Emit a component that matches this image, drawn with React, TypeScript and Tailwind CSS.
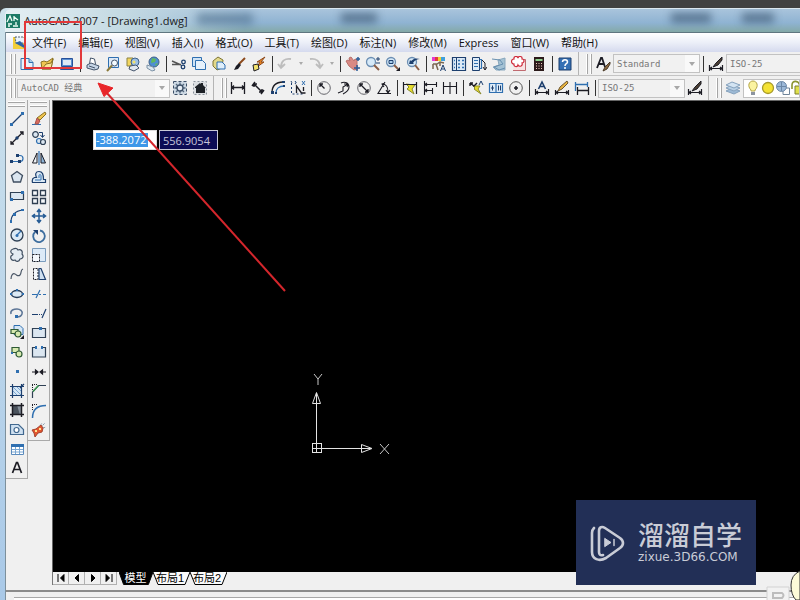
import React from 'react';

const ink = '#1c1c24';
const navy = '#1d3f6e';
const blue = '#2f6fb0';
const sky = '#a9cdea';

const icons: Record<string, React.ReactNode> = {
  // standard toolbar
  new: (
    <>
      <path d="M2 2.500h8l4 4v7H2z" fill="#e8f1fb" stroke={blue} />
      <path d="M10 2.500v4h4" fill={sky} stroke={blue} />
    </>
  ),
  open: (
    <>
      <path d="M2 6l3-1 3 1 6-4-2 11-9 0z" fill="#f0c550" stroke="#8a7020" />
      <path d="M3 13l4-5 5-1 2-4-2 10z" fill="#fbe394" stroke="#8a7020" />
    </>
  ),
  save: (
    <>
      <path d="M2.500 2.500h11v8h-11z" fill="#5b8fd0" stroke="#27509a" />
      <path d="M4 4h8v5H4z" fill="#dde9f6" />
      <path d="M1.500 11.500h13v2h-13z" fill="#8fb2dd" stroke="#27509a" />
    </>
  ),
  print: (
    <>
      <path d="M4.500 8l1-6 4 1 1 5" fill="#fff" stroke="#44546a" />
      <path d="M2 9l4-2 8 3-1 3-4 1-7-2z" fill="#c6d5e6" stroke="#44546a" />
      <path d="M4 10l6 2" stroke="#44546a" />
    </>
  ),
  preview: (
    <>
      <path d="M3.500 1.500h10v10h-10z" fill="#dbe8f6" stroke={blue} />
      <circle cx="9.500" cy="7" r="3" fill="#f4fbff" stroke="#44546a" />
      <path d="M7 9.500L2 15" stroke="#8b7a3a" strokeWidth="2" />
    </>
  ),
  publish: (
    <>
      <path d="M2 2h6l2 3v5H2z" fill="#f3d65e" stroke="#8d8340" />
      <circle cx="10" cy="6" r="4" fill="#9cc0e4" stroke="#3e6088" />
      <path d="M5 10l6-1 3 3-5 3-5-2z" fill="#dfe7ef" stroke="#44546a" />
      <circle cx="9" cy="6" r="1.500" fill="#f3e26b" />
    </>
  ),
  web: (
    <>
      <circle cx="9" cy="6" r="5" fill="#4f8fd2" stroke="#3e6088" />
      <path d="M7 2l4 1-1 3-4 1zM10 8l3-1-2 3z" fill="#62b95a" />
      <path d="M2 9l6 2 2 3-3 1-5-3z" fill="#dbe7f0" stroke="#7d92a6" />
    </>
  ),
  cut: (
    <>
      <path d="M1 5l9 4M1 8.500h9" stroke="#555" strokeWidth="1.400" />
      <circle cx="12.500" cy="6" r="1.800" fill="none" stroke={navy} strokeWidth="1.300" />
      <circle cx="12" cy="11" r="1.800" fill="none" stroke={navy} strokeWidth="1.300" />
    </>
  ),
  copy: (
    <>
      <path d="M1.500 1.500h9v9h-9z" fill="#cfe3f5" stroke={blue} />
      <path d="M4.500 4.500h7l3 3v6h-10z" fill="#e6f1fb" stroke={blue} />
    </>
  ),
  paste: (
    <>
      <path d="M2 5l5-4 5 3-1 8-5 2-4-4z" fill="#e3d98a" stroke="#7d7434" />
      <path d="M6 6h5l3 3v4H6z" fill="#dfeefa" stroke={blue} />
    </>
  ),
  match: (
    <>
      <path d="M14 2L8 8" stroke="#8c4a1c" strokeWidth="2" />
      <path d="M8 7l2 2-3 4-4 1 2-4z" fill={ink} />
    </>
  ),
  block: (
    <>
      <path d="M14 1L6 6h3l-3 5 7-5h-3z" fill="#f08a24" stroke="#8c4a1c" />
      <path d="M2 9l5-1 1 5-5 2z" fill="#f3e26b" stroke={ink} />
    </>
  ),
  undo: (
    <path d="M14 3C8 2 4 5 4 11M1 8l3 4 4-4" fill="none" stroke="#bdbdbd" strokeWidth="1.800" />
  ),
  redo: (
    <path d="M2 3c6-1 10 2 10 8M15 8l-3 4-4-4" fill="none" stroke="#bdbdbd" strokeWidth="1.800" />
  ),
  pan: (
    <>
      <path d="M1 5l2-1 2 1-1-3 2-1 3 4 1-2 2 1v5l1 4-4 1-5-4z" fill="#d98a84" stroke="#b9706a" />
      <path d="M12 9v6M9 12h6M13 1v4M11 3h4" stroke="#2a5c96" strokeWidth="1.500" />
    </>
  ),
  zoom: (
    <>
      <circle cx="6" cy="6" r="4.500" fill="#d6e9f8" stroke="#6d8fb3" strokeWidth="1.300" />
      <path d="M9 9l5 5" stroke="#8a5d46" strokeWidth="2" />
      <path d="M11 3h4M13 1v4M11 7h4" stroke={navy} />
    </>
  ),
  zoomWindow: (
    <>
      <circle cx="6" cy="6" r="4.500" fill="#d6e9f8" stroke="#6d8fb3" strokeWidth="1.300" />
      <path d="M4 4.500h4v3H4z" fill={sky} stroke={navy} />
      <path d="M9 9l4 4" stroke="#8a5d46" strokeWidth="2" />
      <path d="M15 11v4h-4z" fill={ink} />
    </>
  ),
  zoomPrev: (
    <>
      <circle cx="7" cy="6" r="4.500" fill="#d6e9f8" stroke="#6d8fb3" strokeWidth="1.300" />
      <path d="M10 9l4 5" stroke="#8a5d46" strokeWidth="2" />
      <path d="M4 8l1-4 1 1c3-3 6-3 9-2-3 0-5 1-7 4l1 1z" fill={navy} />
    </>
  ),
  properties: (
    <>
      <path d="M1 1h3v4H1z" fill="#e43bd0" />
      <path d="M4 1h3v4H4z" fill="#e23b3b" />
      <path d="M7 1h3v4H7z" fill="#f0d332" />
      <path d="M10 1h4v4h-4z" fill="#3fa0dd" />
      <path d="M2 8h4l3-2 4 1M2 8v5M5 8l2 6M9 7v3" stroke="#7a6650" fill="none" strokeWidth="1.500" />
      <path d="M9.500 15l2.500-6 2.500 6M10.500 13h3" stroke={navy} fill="none" />
    </>
  ),
  designCenter: (
    <>
      <path d="M1.500 1.500h13v13h-13z" fill="#dceaf7" stroke={navy} strokeWidth="1.200" />
      <path d="M5.500 2v12" stroke={navy} />
      <path d="M7 4.500h2M11 4.500h2M7 8h2M11 8h2M7 11.500h2M11 11.500h2M3 4.500h1M3 8h1M3 11.500h1" stroke={blue} strokeWidth="1.500" />
    </>
  ),
  palettes: (
    <>
      <path d="M1.500 1.500h7v13h-7z" fill="#dceaf7" stroke={navy} />
      <path d="M3 4.500h4M3 7.500h4M3 10.500h4M8.500 3.500h2v9h-2" stroke={blue} fill="none" strokeWidth="1.200" />
      <path d="M11 4l3 3v6M12 11l2 3 2-3" stroke={ink} fill="none" />
    </>
  ),
  sheetSet: (
    <>
      <path d="M7 4l7-2v12H5l-3-3 6-2z" fill="#a4c2d4" stroke="#8aa8bd" />
      <path d="M1 3l8 1 3 4-9 3 5 3 6-2" stroke="#6890b0" fill="none" />
    </>
  ),
  markup: (
    <>
      <path d="M4 3.500h10.500v11H2" fill="#f7e3e3" stroke="#c06a70" />
      <path d="M3 3a2 2 0 0 1 4-1 2 2 0 0 1 4 1 2 2 0 0 1 0 4 2 2 0 0 1-4 2 2 2 0 0 1-4-1 2.500 2.500 0 0 1 0-5z" fill="#fff" stroke="#cf2a3a" strokeWidth="1.200" />
    </>
  ),
  calculator: (
    <>
      <path d="M3 1h10v14H3z" fill="#2b1a1a" />
      <path d="M4.500 3h7v2h-7z" fill="#8fd08f" />
      <path d="M5 7.500h1M7.500 7.500h1M10 7.500h1M5 10h1M7.500 10h1M10 10h1M5 12.500h1M7.500 12.500h1M10 12.500h1" stroke="#f1c9c0" />
    </>
  ),
  help: (
    <>
      <path d="M2 2h12v12H2z" fill="#3570b4" stroke="#1d3f6e" />
      <path d="M5.500 6c0-3 5-3 5 0 0 2-2.500 1.500-2.500 4M8 11v2" stroke="#fff" fill="none" strokeWidth="1.500" />
    </>
  ),
  textStyle: (
    <>
      <path d="M2 12L6 2h1l3 9M4 8h5" stroke={ink} fill="none" strokeWidth="1.800" />
      <path d="M15 6l-5 5-2 4 4-2 3-5z" fill="#8c6a42" stroke="#4a3a28" />
    </>
  ),
  dimStyle: (
    <>
      <path d="M1.500 9v6M14.500 9v6M1 12.500h14M4 11l-2 1.500L4 14M12 11l2 1.500-2 1.500" stroke={ink} fill="none" strokeWidth="1.200" />
      <path d="M14 1L8 7l-3 4 5-2 4-5z" fill="#4c3f33" stroke={ink} />
    </>
  ),
  // workspace toolbar
  gear: (
    <>
      <path d="M1.500 1.500h13v13h-13z" fill="#ccd8e3" stroke="#3c4f66" strokeDasharray="3 2" />
      <path d="M8 2.500v11M2.500 8h11M4 4l8 8M12 4l-8 8" stroke="#566a80" strokeWidth="1.300" />
      <circle cx="8" cy="8" r="3" fill="#e7eef5" stroke="#3c4f66" strokeWidth="1.300" />
    </>
  ),
  home: (
    <>
      <path d="M1.500 1.500h13v13h-13z" fill="#dcdfe2" stroke="#8a929b" strokeDasharray="2 2" />
      <path d="M3 7l5-4 1 1V3h2v2l3 3h-1v5H4V8H3z" fill="#1d2126" />
    </>
  ),
  // dimension toolbar
  dimLinear: (
    <path d="M1.500 2v12M14.500 2v12M1 7.500h14M4 5.500l-2 2 2 2M12 5.500l2 2-2 2" stroke={ink} fill="none" strokeWidth="1.300" />
  ),
  dimAligned: (
    <path d="M2 6l3-4M11 14l3-4M4 4l8 8M4 4v3M4 4h3M12 12V9M12 12H9" stroke={ink} fill="none" strokeWidth="1.500" />
  ),
  dimArc: (
    <>
      <path d="M2 13C2 6 6 2 13 2" stroke={ink} fill="none" strokeWidth="1.300" />
      <path d="M6 13c0-4 3-7 8-7" stroke={blue} fill="none" strokeWidth="1.300" />
      <path d="M1 11h3v3H1zM12 1h3v2h-3zM5 12h2v2H5zM13 5h2v2h-2z" fill={navy} />
    </>
  ),
  dimOrdinate: (
    <>
      <path d="M1.500 3v11H14M5 1l2 3M5 4l2-3M1 1l1 2" stroke={navy} fill="none" strokeDasharray="2 2" />
      <path d="M6.500 13V6l5 7h4M13.500 7v4" stroke={ink} fill="none" strokeWidth="1.300" />
      <path d="M12 1l3 4M15 1l-3 4" stroke={blue} />
    </>
  ),
  dimRadius: (
    <>
      <circle cx="8" cy="8" r="6.300" fill="none" stroke="#66666c" />
      <path d="M8.500 8.500L4.500 4.500M4 7V4h3" stroke={ink} fill="none" strokeWidth="1.300" />
    </>
  ),
  dimJogged: (
    <path d="M5 3c4-2 8 0 8 4 0 3-2 5-6 7M2 13l5-2 0-4 5-3M12 4l-1 3M12 4H8" stroke={ink} fill="none" strokeWidth="1.100" />
  ),
  dimDiameter: (
    <>
      <circle cx="8" cy="8" r="6.300" fill="none" stroke="#66666c" />
      <path d="M4.500 4.500l7 7M4 7V4h3M12 9v3H9" stroke={ink} fill="none" strokeWidth="1.300" />
    </>
  ),
  dimAngular: (
    <path d="M9 2L2 13.500h13M6 4c4 0 6 3 6 8M9 3L6 4l2 3M10 10l2 3 2-3" stroke={ink} fill="none" strokeWidth="1.100" />
  ),
  dimQuick: (
    <>
      <path d="M4 4l9 1-3 4 2 5-7-5 2-2z" fill="#e6dc2c" stroke="#8b8a30" />
      <path d="M1.500 2v12M14.500 2v12M1 4.500h13" stroke={ink} fill="none" strokeWidth="1.200" />
    </>
  ),
  dimBaseline: (
    <path d="M2.500 1v14M3 4.500h12M3 10.500h7M10.500 8v6M14.500 2v5M5 3L3 4.500 5 6M5 9l-2 1.500L5 12" stroke={ink} fill="none" strokeWidth="1.100" />
  ),
  dimContinue: (
    <path d="M1.500 2v12M8 2v12M14.500 2v12M1 6.500h13" stroke={ink} fill="none" strokeWidth="1.100" />
  ),
  leader: (
    <>
      <path d="M5 6h7l-2 3 3 5-7-5 1-1z" fill="#e6dc2c" stroke="#8b8a30" />
      <path d="M2 3l4 3 3-3M2 3v3M2 3h3" stroke={ink} fill="none" strokeWidth="1.400" />
      <path d="M11 5l2-4 2 4" stroke={navy} fill="none" />
    </>
  ),
  tolerance: (
    <>
      <path d="M1.500 3.500h13v9h-13zM8 3.500v9" fill="#dfecf8" stroke={blue} strokeWidth="1.200" />
      <path d="M4.500 5.500v5M3 8h3M10.500 5.500v5M12.500 5.500v5" stroke={navy} />
    </>
  ),
  center: (
    <>
      <circle cx="8" cy="8" r="6.300" fill="none" stroke="#555" />
      <path d="M8 6v4M6 8h4" stroke={ink} strokeWidth="1.600" />
    </>
  ),
  dimText: (
    <>
      <path d="M4.500 9L8 2l3.500 7M5.500 6.500h5" stroke={navy} fill="none" strokeWidth="1.600" />
      <path d="M1.500 9v6M14.500 9v6M1 12.500h14M4 11l-2 1.500L4 14M12 11l2 1.500-2 1.500" stroke={ink} fill="none" strokeWidth="1.200" />
    </>
  ),
  dimEdit: (
    <>
      <path d="M13 1l1 2-6 6-4 2 2-4z" fill="#e8b440" stroke="#6b5530" />
      <path d="M1.500 10v5M14.500 10v5M1 12.500h14M4 11l-2 1.500L4 14M12 11l2 1.500-2 1.500" stroke={ink} fill="none" strokeWidth="1.200" />
    </>
  ),
  dimUpdate: (
    <>
      <path d="M1.500 2v9M13.500 2v5M1 4.500h13" stroke={blue} fill="none" strokeWidth="1.300" />
      <path d="M3.500 7v8M14.500 7v8M3 10.500h12" stroke={ink} fill="none" strokeWidth="1.300" />
    </>
  ),
  // layers
  layers: (
    <>
      <path d="M1 11l6-3 8 3-6 3z" fill="#9dbad6" stroke="#86a2bd" />
      <path d="M1 8l6-3 8 3-6 3z" fill="#b8d0e6" stroke="#86a2bd" />
      <path d="M1 5l6-3 8 3-6 3z" fill="#d3e4f3" stroke="#86a2bd" />
    </>
  ),
  bulb: (
    <>
      <path d="M6 10C2 6 4 1 8 1s6 5 2 9v1H6z" fill="#fbf3a0" stroke="#b3a444" />
      <path d="M6 12h4v3H6z" fill="#8c94a0" />
    </>
  ),
  sun: <circle cx="8" cy="8" r="5.500" fill="#f4e234" stroke="#a79a2c" strokeWidth="1.300" />,
  freeze: (
    <>
      <path d="M8 8h6.500v6.500H8z" fill="#fff" stroke="#70859a" />
      <circle cx="6.500" cy="6.500" r="5" fill="#9bb8d8" stroke="#6c88a8" />
      <path d="M6.500 2v9M2 6.500h9" stroke="#6c88a8" />
    </>
  ),
  lock: (
    <>
      <path d="M2 9V5c0-5 7-5 8 1" fill="none" stroke="#8a9430" strokeWidth="1.600" />
      <path d="M5 6h9v8H5z" fill="#dfe04a" stroke="#7d8030" />
    </>
  ),
  // draw toolbar
  line: (
    <>
      <path d="M2 14L14 2" stroke={navy} strokeWidth="1.200" />
      <path d="M1 12h3v3H1zM12 1h3v3h-3z" fill={blue} />
    </>
  ),
  xline: (
    <>
      <path d="M2 14L14 2M11 2h3v3M2 11v3h3" stroke={ink} strokeWidth="1.300" fill="none" />
      <circle cx="8" cy="8" r="1.700" fill={navy} />
    </>
  ),
  pline: (
    <>
      <path d="M2 11.500h9a3 3 0 0 0 0-6H9" stroke={blue} strokeWidth="1.200" fill="none" />
      <path d="M1 10h3v3H1zM9 10h3v3H9zM7 4h3v3H7z" fill={navy} />
    </>
  ),
  polygon: <path d="M8 2.500l5.500 4L11.500 13h-7l-2-6.500z" fill="#dbe6f0" stroke="#3f4e60" strokeWidth="1.300" />,
  rect: (
    <>
      <path d="M1.500 4.500h13v7h-13z" fill="#dbe6f0" stroke="#2f4054" strokeWidth="1.200" />
      <path d="M12 3h3v3h-3zM1 10h3v3H1z" fill={blue} />
    </>
  ),
  arc: (
    <>
      <path d="M2 14C2 7 6 3 14 2" stroke={navy} strokeWidth="1.200" fill="none" />
      <path d="M1 12h2v3H1zM4 5h3v3H4zM12 1h3v2h-3z" fill={blue} />
    </>
  ),
  circle: (
    <>
      <circle cx="8" cy="8" r="6" fill="#dbe9f5" stroke="#2f4054" strokeWidth="1.300" />
      <path d="M8 8l4-4" stroke={blue} strokeWidth="1.200" />
      <circle cx="8" cy="8.500" r="1.500" fill={blue} />
    </>
  ),
  revcloud: (
    <path d="M4 2c2-1 4-1 5 1 3-1 5 1 4 4 2 2 1 5-2 5-1 3-4 3-5 1-3 1-5-1-4-4 1-1 2-1 2-2-3-1-3-4 0-5z" fill="#e4ebf2" stroke="#3f4e60" strokeWidth="1.200" />
  ),
  spline: <path d="M2 13c0-4 2-6 4-5s3 3 5 1 0-5 3-6" stroke="#4a5666" strokeWidth="1.200" fill="none" />,
  ellipse: (
    <>
      <ellipse cx="8" cy="8" rx="5.500" ry="3.500" fill="#dbe9f5" stroke="#243a56" strokeWidth="1.500" />
      <path d="M1 7h2v2H1zM13 7h2v2h-2zM7 3h2v2H7z" fill={blue} />
    </>
  ),
  ellipseArc: (
    <>
      <path d="M2 9C1 5 5 4 8 4s6 2 5 5-3 3-5 3" stroke="#5c7596" strokeWidth="1.500" fill="none" />
      <path d="M6 10h3v3H6z" fill={blue} />
    </>
  ),
  insert: (
    <>
      <path d="M5 1.500h6l3 3v6H5z" fill="#d5e6f5" stroke={blue} />
      <path d="M2 5.500h7v4H2z" fill="#d7eab0" stroke="#2f5a34" strokeWidth="1.200" />
      <circle cx="9" cy="10" r="3" fill="#d7eab0" stroke="#2f5a34" strokeWidth="1.200" />
      <path d="M15 11v4h-4z" fill={ink} />
    </>
  ),
  makeBlock: (
    <>
      <path d="M3 3.500h7v5H3z" fill="#d7eab0" stroke="#2f5a34" strokeWidth="1.200" />
      <circle cx="10" cy="10" r="3" fill="#d7eab0" stroke="#2f5a34" strokeWidth="1.200" />
      <path d="M2 8h2v2H2z" fill={blue} />
    </>
  ),
  point: <path d="M7 7h3v3H7z" fill={blue} />,
  hatch: (
    <>
      <path d="M3 3h10v10H3z" fill="#d5e6f5" />
      <path d="M3 7l6 6M3 3l10 10M7 3l6 6" stroke="#7aa7d3" />
      <path d="M3.500 1v14M12.500 1v14M1 3.500h14M1 12.500h14M11 5l4-4" stroke={navy} strokeWidth="1.200" />
    </>
  ),
  gradient: (
    <>
      <path d="M3 3h10v10H3z" fill="#4a525c" />
      <path d="M8 3h5v10h-2z" fill="#848e99" />
      <path d="M3.500 1v14M12.500 1v14M1 3.500h14M1 12.500h14" stroke={ink} strokeWidth="1.500" />
    </>
  ),
  region: (
    <>
      <path d="M1.500 3.500h8l5 5v5h-13z" fill="#cfe0f0" stroke="#41688f" strokeWidth="1.200" />
      <circle cx="7.500" cy="9" r="2.500" fill="#fff" stroke="#41688f" strokeWidth="1.200" />
    </>
  ),
  table: (
    <>
      <path d="M2.500 3.500h12v10h-12z" fill="#fff" stroke="#5b8bbd" />
      <path d="M2 3h13v3H2z" fill={blue} />
      <path d="M6.500 6v7M10.500 6v7M3 8.500h11M3 11h11" stroke="#7aa7d3" />
    </>
  ),
  mtext: <path d="M3.500 13L7.500 2.500h1L12.500 13M5 9.500h6" stroke={ink} fill="none" strokeWidth="1.700" />,
  // modify toolbar
  erase: (
    <>
      <path d="M1 13.500h9" stroke={blue} />
      <path d="M14 1l1 2-6 6-3-2z" fill="#f0c550" stroke="#8a7020" />
      <path d="M6 7l3 3-2 3H4z" fill="#d9695c" stroke="#a4554d" />
    </>
  ),
  copyObj: (
    <>
      <circle cx="4.500" cy="4.500" r="2.800" fill="#dbe6f0" stroke="#2f4054" strokeWidth="1.200" />
      <circle cx="8" cy="11" r="2.500" fill="#dbe6f0" stroke={blue} strokeWidth="1.200" />
      <circle cx="12" cy="12" r="2.500" fill="#dbe6f0" stroke="#2f4054" strokeWidth="1.200" />
      <path d="M8 2.500h3.500V7M9.500 5l2 2.500 2-2.500" stroke={navy} fill="none" />
    </>
  ),
  mirror: (
    <>
      <path d="M6 3v10H1.500z" fill="#eef3f8" stroke={ink} />
      <path d="M10 3v10h4.500z" fill="#8fb5d8" stroke={ink} />
      <path d="M8 1v14" stroke={blue} strokeWidth="1.200" />
    </>
  ),
  offset: (
    <>
      <path d="M1.500 13.500h13v-3h-2c0-5-1-8-4.500-8s-4 3-2.500 6h-2q-3 1-2 5z" fill="#dbe9f5" stroke={navy} strokeWidth="1.200" />
      <path d="M4 11h6V7c0-2-2-2-2 0v2" stroke={blue} fill="none" />
    </>
  ),
  array: (
    <path d="M1.500 1.500h5v5h-5zM9.500 1.500h5v5h-5zM1.500 9.500h5v5h-5zM9.500 9.500h5v5h-5z" fill="#f6f8fa" stroke="#2f3e50" strokeWidth="1.300" />
  ),
  move: (
    <path d="M8 2v12M2 8h12M6 4l2-2.500L10 4M6 12l2 2.500 2-2.500M4 6L1.500 8 4 10M12 6l2.500 2-2.500 2" stroke="#245a94" fill="none" strokeWidth="1.500" />
  ),
  rotate: (
    <>
      <path d="M4 4A5.800 5.800 0 1 0 9 2.500" stroke="#3d6e9f" fill="none" strokeWidth="1.800" />
      <path d="M2 2h5v5z" fill={navy} />
    </>
  ),
  scale: (
    <>
      <path d="M1.500 1.500h13v13h-13z" fill="#dceaf7" stroke="#7a9cbd" />
      <path d="M1.500 7.500h7v7h-7z" fill="#f4f8fc" stroke={ink} strokeDasharray="2 1" />
    </>
  ),
  stretch: (
    <>
      <path d="M2.500 2.500v11H7v-11z" fill="#f4f8fc" stroke={ink} strokeDasharray="2 1" />
      <path d="M8 2.500h2l4.500 11H8z" fill="#cfe0f0" stroke={navy} strokeWidth="1.200" />
    </>
  ),
  trim: <path d="M1 8.500h5M8 8.500h2M12 8.500h3M5 12l4-8" stroke={blue} strokeWidth="1.200" />,
  extend: <path d="M1 9.500h6M8 9.500h1M10 9.500h1M11 13l4-9" stroke={navy} strokeWidth="1.200" />,
  breakPoint: (
    <>
      <path d="M1.500 3.500h13v9h-13z" fill="#dbe6f0" stroke="#2f4054" strokeWidth="1.200" />
      <path d="M8 2h3v3H8z" fill={blue} />
    </>
  ),
  breakObj: (
    <>
      <path d="M2 4h12v9H2z" fill="#dbe6f0" />
      <path d="M5 3.500H1.500V13h13V3.500H11" stroke="#2f4054" strokeWidth="1.200" fill="none" />
      <path d="M4 2h2v3H4zM10 2h2v3h-2z" fill={blue} />
    </>
  ),
  join: <path d="M1 8h5M10 8h5M4.500 6l2.500 2-2.500 2zM11.500 6L9 8l2.500 2z" stroke={ink} fill={navy} strokeWidth="1.200" />,
  chamfer: (
    <>
      <path d="M1.500 15V9l6-6.500H15" stroke="#2f4054" fill="none" strokeWidth="1.200" />
      <path d="M1 1.500h6M1.500 2v6" stroke={ink} strokeDasharray="1 1" />
      <path d="M2 8.500l5.500-6" stroke="#3a9a4e" strokeWidth="1.300" />
    </>
  ),
  fillet: (
    <>
      <path d="M1.500 15C1.500 7 6 2.500 15 2.500" stroke={blue} fill="none" strokeWidth="1.500" />
      <path d="M1 1.500h6M1.500 2v6" stroke={ink} strokeDasharray="1 1" />
    </>
  ),
  explode: (
    <>
      <path d="M10 5l4-4M12 6l3-1M9 4l2-3" stroke="#7d93a8" strokeDasharray="2 1" />
      <path d="M1 8l4-1 5-4 2 3-1 4-4 1-3 4-1-4z" fill="#e4562e" stroke="#a34430" />
      <path d="M4 8h2v2H4zM8 6h2v2H8z" fill="#fbe394" />
    </>
  ),
};

type Entry = string | { sep: true } | { arrow: true };
const sep: Entry = { sep: true };
const arrow: Entry = { arrow: true };

const standardBar: Entry[] = [
  'new', 'open', 'save', sep,
  'print', 'preview', 'publish', 'web', sep,
  'cut', 'copy', 'paste', 'match', 'block', sep,
  'undo', arrow, 'redo', arrow, sep,
  'pan', 'zoom', 'zoomWindow', 'zoomPrev', sep,
  'properties', 'designCenter', 'palettes', 'sheetSet', 'markup', 'calculator', sep,
  'help',
];

const dimensionBar: Entry[] = [
  'dimLinear', 'dimAligned', 'dimArc', 'dimOrdinate', sep,
  'dimRadius', 'dimJogged', 'dimDiameter', 'dimAngular', sep,
  'dimQuick', 'dimBaseline', 'dimContinue', sep,
  'leader', 'tolerance', 'center', sep,
  'dimText', 'dimEdit', 'dimUpdate', sep,
];

const drawBar = [
  'line', 'xline', 'pline', 'polygon', 'rect', 'arc', 'circle', 'revcloud', 'spline', 'ellipse',
  'ellipseArc', 'insert', 'makeBlock', 'point', 'hatch', 'gradient', 'region', 'table', 'mtext',
];

const modifyBar = [
  'erase', 'copyObj', 'mirror', 'offset', 'array', 'move', 'rotate', 'scale', 'stretch',
  'trim', 'extend', 'breakPoint', 'breakObj', 'join', 'chamfer', 'fillet', 'explode',
];

const menus = [
  '文件(F)', '编辑(E)', '视图(V)', '插入(I)', '格式(O)', '工具(T)',
  '绘图(D)', '标注(N)', '修改(M)', 'Express', '窗口(W)', '帮助(H)',
];

function Icon({ name }: { name: string }) {
  return (
    <svg viewBox="0 0 16 16" className="w-4 h-4 shrink-0" aria-hidden="true">
      {icons[name]}
    </svg>
  );
}

function ToolButton({ name, className = 'w-5 h-5' }: { name: string; className?: string }) {
  return (
    <button type="button" aria-label={name} className={`flex items-center justify-center shrink-0 ${className}`}>
      <Icon name={name} />
    </button>
  );
}

function ToolList({ items }: { items: Entry[] }) {
  return (
    <>
      {items.map((item, i) => {
        if (typeof item === 'string') return <ToolButton key={i} name={item} />;
        if ('sep' in item) {
          return (
            <span key={i} className="flex justify-center w-[6px] shrink-0">
              <span className="w-px h-4 bg-[#333]" />
            </span>
          );
        }
        return (
          <button key={i} type="button" aria-label="history" className="flex justify-center w-[11px] shrink-0">
            <svg viewBox="0 0 4 3" className="w-1 h-[3px]" aria-hidden="true">
              <path d="M0 0h4L2 3z" fill="#aaa" />
            </svg>
          </button>
        );
      })}
    </>
  );
}

function Grip() {
  return (
    <span className="flex gap-[2px] h-5 ml-1 mr-px shrink-0">
      <span className="w-[2px] bg-white border-r border-[#a5a5a5]" />
      <span className="w-[2px] bg-white border-r border-[#a5a5a5]" />
    </span>
  );
}

function BarEnd() {
  return <span className="w-px h-6 mx-[3px] bg-[#b4b4b4] shrink-0" />;
}

function Combo({ label, value, className }: { label: string; value: string; className: string }) {
  return (
    <span className={`relative flex shrink-0 h-[19px] ${className}`}>
      <select
        aria-label={label}
        defaultValue={value}
        className="appearance-none w-full h-[19px] pl-[3px] leading-[16px] bg-[#f1f1f1] border border-[#c2c2c2] font-['DejaVu_Sans_Mono','Noto_Sans_CJK_SC',monospace] text-[9px] text-[#777]"
      >
        <option>{value}</option>
      </select>
      <span className="absolute right-px top-px bottom-px w-[14px] flex items-center justify-center bg-[#f9f9f9] pointer-events-none">
        <svg viewBox="0 0 6 4" className="w-[6px] h-1" aria-hidden="true">
          <path d="M0 0h6L3 4z" fill="#a8a8a8" />
        </svg>
      </span>
    </span>
  );
}

function SideBar({ items, className }: { items: string[]; className: string }) {
  return (
    <div className={`flex flex-col border-r border-b border-[#a9a9a9] ${className}`}>
      <div className="flex flex-col gap-[2px] h-[9px] pt-px px-[2px]">
        <span className="h-[2px] bg-white border-b border-[#a5a5a5]" />
        <span className="h-[2px] bg-white border-b border-[#a5a5a5]" />
      </div>
      {items.map((name) => (
        <ToolButton key={name} name={name} className="w-full flex-1 min-h-0" />
      ))}
    </div>
  );
}

function TitleBar() {
  return (
    <header className="relative flex items-center h-6 pl-px gap-1 rounded-tl-md overflow-hidden bg-linear-to-b from-[#a9c4dc] via-[#8fb3d2] via-60% to-[#84a9a8] border-t border-[#dbe7f0]">
      <span className="absolute left-0 inset-y-0 w-60 bg-linear-to-r from-[#e6f0f4] via-[#c3d9e2] to-transparent" />
      <span className="absolute left-48 top-1 w-14 h-3 bg-[#4d6f8c] blur-xs opacity-60" />
      <span className="absolute left-[336px] top-1 w-9 h-[10px] bg-[#3e5a75] blur-xs opacity-70" />
      <span className="absolute left-[666px] top-1 w-10 h-[10px] bg-[#3e5a75] blur-xs opacity-70" />
      <span className="absolute left-[737px] top-1 w-8 h-[10px] bg-[#3e5a75] blur-xs opacity-70" />
      <svg viewBox="0 0 14 14" className="relative w-[14px] h-[14px]" aria-hidden="true">
        <path d="M0 0h14v14H0z" fill="#1d7a66" />
        <path d="M1 8l3-6 2 5M8 2v5M8 3l4 3M2 10h4M7 12h5M2 12h2M10 8v3" stroke="#f0fff8" fill="none" strokeWidth="1.300" />
      </svg>
      <h1 className="relative text-[11px] leading-4 text-[#1a1a1a] whitespace-nowrap">AutoCAD 2007 - [Drawing1.dwg]</h1>
    </header>
  );
}

function MenuBar() {
  return (
    <nav className="flex items-center h-5 bg-linear-to-b from-white via-[#eceff8] to-[#d5daee] border-t border-[#5f7680] pl-[6px]">
      <svg viewBox="0 0 14 14" className="w-[14px] h-[14px] mr-[6px] shrink-0" aria-hidden="true">
        <path d="M1 1h11v12H1z" fill="#f2cf3b" />
        <path d="M3 1h8l3 3v3H4z" fill="#e9f2fa" stroke="#567" strokeDasharray="2 1" />
        <path d="M3 7l5-2 6 6v2z" fill="#2b64a8" />
      </svg>
      <div className="flex gap-3">
        {menus.map((m) => (
          <button key={m} type="button" className="text-[11px] leading-4 text-[#111] whitespace-nowrap">
            {m}
          </button>
        ))}
      </div>
    </nav>
  );
}

function UcsIcon() {
  return (
    <svg viewBox="0 0 90 90" className="absolute left-[255px] top-[270px] w-[90px] h-[90px]" aria-label="UCS">
      <g stroke="#e4e4e4" fill="none" shapeRendering="crispEdges">
        <path d="M4.500 72.500h9v9h-9zM8.500 32v50M4 77.500h59" />
      </g>
      <g stroke="#e4e4e4" fill="none">
        <path d="M8.500 21.500L4.500 32.500h8zM8.500 22v10" />
        <path d="M64 77.500L53.500 73.500v8zM54 77.500h9" />
        <path d="M6 3l4 5 4-5M10 8v6" stroke="#c8c8c8" />
        <path d="M72 73l9 10M81 73l-9 10" stroke="#c8c8c8" />
      </g>
    </svg>
  );
}

function LayoutTabs() {
  const moves = ['M2 1v8M8 1.500L4.500 5 8 8.500z', 'M6.500 1.500L3 5l3.500 3.500z', 'M3.500 1.500L7 5 3.500 8.500z', 'M8 1v8M2 1.500L5.500 5 2 8.500z'];
  return (
    <div className="flex h-[13px] bg-[#f0f0f0] border-l border-[#777]">
      {moves.map((d) => (
        <button key={d} type="button" aria-label="scroll tabs" className="flex items-center justify-center w-4 border-r border-b border-[#b0b0b0]">
          <svg viewBox="0 0 10 10" className="w-[10px] h-[10px]" aria-hidden="true">
            <path d={d} fill="#000" stroke="#000" />
          </svg>
        </button>
      ))}
      <div className="flex ml-[2px]">
        {['模型', '布局1', '布局2'].map((tab, i) => (
          <button key={tab} type="button" className={`relative h-[13px] font-['Liberation_Sans','Noto_Sans_CJK_SC',sans-serif] text-[11px] leading-[13px] whitespace-nowrap ${i === 0 ? 'w-[34px] pr-px text-white' : 'w-[37px] pr-[3px] text-black'}`}>
            <svg viewBox="0 0 37 13" preserveAspectRatio="none" className="absolute inset-0 w-full h-full" aria-hidden="true">
              <path d="M0 0l5 12.500h27L37 0" fill={i === 0 ? '#000' : '#fbfbfb'} stroke="#000" />
            </svg>
            <span className="relative">{tab}</span>
          </button>
        ))}
      </div>
    </div>
  );
}

function Watermark() {
  return (
    <div className="absolute right-11 bottom-[15px] w-[180px] h-[85px] flex items-center gap-3 pl-[14px] bg-[#222f56] text-[#c9ccd6]">
      <svg viewBox="0 0 36 38" className="w-9 h-[38px] shrink-0" fill="none" stroke="#c9ccd6" strokeLinecap="round" strokeLinejoin="round" aria-hidden="true">
        <path d="M13 31c-3 1-4-1-4-3V7c0-4 3-5 6-3l15 10c4 3 4 7 0 10L16 34C9 38 2 35 2 28V9c0-3 1-4 2-5" strokeWidth="2.600" />
        <path d="M15 14.500l6 4-6 4z" fill="#c9ccd6" strokeWidth="1" />
        <path d="M24 15.500v6" strokeWidth="1.500" />
      </svg>
      <div className="flex flex-col whitespace-nowrap">
        <span className="font-['Liberation_Sans','Noto_Sans_CJK_SC',sans-serif] text-[26px] leading-[28px] font-medium">溜溜自学</span>
        <span className="font-['DejaVu_Sans',sans-serif] text-[12px] leading-[14px]">zixue.3D66.COM</span>
      </div>
    </div>
  );
}

export default function App() {
  return (
    <div className="relative flex flex-col h-screen overflow-hidden bg-[#414141] pt-2 font-['Open_Sans','Noto_Sans_CJK_SC',sans-serif]">
      <div className="flex flex-col flex-1 min-h-0 rounded-tl-md bg-linear-to-b from-[#cfe3ec] to-[#a9c9e8] pl-[5px]">
        <TitleBar />
        <div className="flex flex-col flex-1 min-h-0 border-l border-[#7d909c] bg-[#f0f0f0]">
          <MenuBar />

          <div className="flex items-center h-6 border-b border-[#c4c4c4] overflow-hidden">
            <Grip />
            <ToolList items={standardBar} />
            <BarEnd />
            <Grip />
            <ToolButton name="textStyle" />
            <Combo label="Text style" value="Standard" className="w-[87px]" />
            <ToolList items={[sep, 'dimStyle']} />
            <Combo label="Dimension style" value="ISO-25" className="flex-1 -mr-4" />
          </div>

          <div className="flex items-center h-6 overflow-hidden">
            <Grip />
            <Combo label="Workspace" value="AutoCAD 经典" className="w-[153px]" />
            <ToolList items={['gear', 'home']} />
            <BarEnd />
            <Grip />
            <ToolList items={dimensionBar} />
            <Combo label="Current dimension style" value="ISO-25" className="w-[87px]" />
            <ToolButton name="dimStyle" />
            <BarEnd />
            <Grip />
            <ToolButton name="layers" />
            <div className="flex items-center flex-1 h-[19px] pl-px bg-white border border-[#c2c2c2] overflow-hidden">
              {['bulb', 'sun', 'freeze', 'lock'].map((n) => (
                <ToolButton key={n} name={n} className="w-[15px] h-4" />
              ))}
            </div>
          </div>

          <div className="flex flex-1 min-h-0">
            <aside className="flex items-start w-[46px] shrink-0">
              <SideBar items={drawBar} className="w-[22px] h-[379px]" />
              <SideBar items={modifyBar} className="w-[22px] h-[341px]" />
            </aside>
            <main className="flex flex-col flex-1 min-w-0">
              <section aria-label="Drawing" className="relative flex-1 min-h-0 bg-black border-t border-l border-[#666]">
                <div className="absolute left-10 top-[29px] flex gap-[2px] text-[11px]">
                  <div className="w-[64px] h-5 bg-white border border-[#ddd] p-[2px]">
                    <input aria-label="X" readOnly value="-388.2072" className="block w-[52px] h-[14px] bg-[#3d97e8] text-white leading-[14px]" />
                  </div>
                  <input aria-label="Y" readOnly value="556.9054" className="w-[59px] h-5 px-[3px] bg-[#0c0c55] border border-[#c8c8d8] text-[#c6c6da]" />
                </div>
                <UcsIcon />
              </section>
              <LayoutTabs />
            </main>
          </div>

          <footer className="h-[15px] pt-[5px]">
            <div className="h-[10px] border-t-2 border-[#8c8c8c] pt-[5px] pl-2">
              <div className="border-t border-[#a8a8a8] bg-white h-[3px]" />
            </div>
          </footer>
        </div>
      </div>

      <svg viewBox="0 0 300 300" className="absolute left-0 top-0 w-[300px] h-[300px] pointer-events-none" aria-hidden="true">
        <path d="M25 22h56v46H25z" fill="none" stroke="#e2383a" strokeWidth="2" />
        <path d="M285 291L106 92" stroke="#d4262c" strokeWidth="2" />
        <path d="M98 83l15 5-9 8.500z" fill="#e8262a" stroke="#e8262a" />
      </svg>

      <Watermark />
      <svg viewBox="0 0 36 30" className="absolute right-0 bottom-0 w-9 h-[30px]" aria-hidden="true">
        <path d="M3 30V17h22v13" fill="#f2f2f2" stroke="#d2d2d2" />
        <path d="M9 23h9q3 2 0 5H9z" fill="none" stroke="#bdbdbd" strokeWidth="2" />
        <path d="M36 1q-9 4-9 14t5 15h4z" fill="#fdfbd8" stroke="#333" />
      </svg>
    </div>
  );
}
